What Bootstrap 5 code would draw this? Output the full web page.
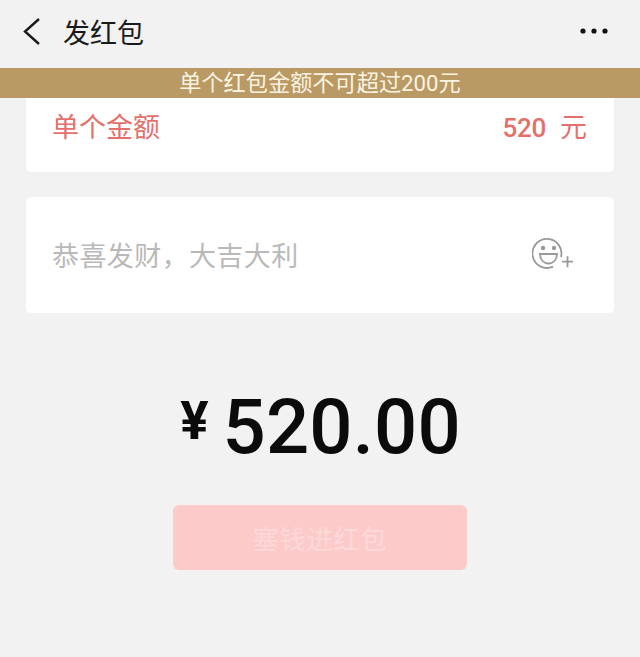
<!DOCTYPE html>
<html lang="zh-CN">
<head>
    <meta charset="UTF-8">
    <meta name="viewport" content="width=device-width, initial-scale=1">
    <title>发红包</title>
    <link href="https://cdn.jsdelivr.net/npm/bootstrap@5.3.2/dist/css/bootstrap.min.css" rel="stylesheet">
    <style>
        body { background: #f2f2f2; font-family: "Roboto", "Noto Sans CJK SC", sans-serif; height: 657px; overflow: hidden; }
        .top-head { height: 68px; padding: 0 30px 0 22px; }
        .top-title { font-size: 27px; color: #1a1a1a; margin-left: 21px; line-height: 1; }
        .dots-icon { display: block; margin-top: -6px; }
        .back-icon { margin-top: -6px; }
        .limit-bar { height: 30px; background: #b99a64; color: #fbf3e2; font-size: 22.2px; line-height: 30px; }
        .form-area { padding: 0 26px; }
        .money-card { height: 74px; background: #fff; border-radius: 0 0 5px 5px; padding: 0 27px 14px 26px; color: #e3716b; font-size: 27px; }
        .money-card .money-val { font-size: 26px; letter-spacing: -.3px; font-weight: 500; }
        .money-card .money-unit { margin-left: 14px; }
        .wish-card { height: 116px; background: #fff; border-radius: 5px; margin-top: 25px; padding: 0 41px 0 26px; color: #b9b9b9; font-size: 27px; letter-spacing: .4px; }
        .wish-text { padding-top: 4px; }
        .smile-icon { margin-top: -5px; }
        .sum-line { margin-top: 68px; height: 92px; padding-left: 1px; color: #0b0b0b; font-family: "Roboto", sans-serif; font-weight: 500; }
        .sum-yen { font-size: 53px; font-weight: 700; margin-right: 14px; margin-bottom: 12px; line-height: 1; }
        .sum-num { font-size: 76px; line-height: 1; letter-spacing: .2px; }
        .send-wrap { margin-top: 32px; }
        .send-btn { width: 294px; height: 65px; padding-top: 11px; background: #fdcaca; color: #fdd9d9; border: 0; border-radius: 6px; font-size: 26px; letter-spacing: 1px; }
        .send-btn:disabled { background: #fdcaca; color: #fdd9d9; opacity: 1; }
    </style>
</head>
<body>

<div class="top-head d-flex align-items-center justify-content-between">
    <div class="d-flex align-items-center">
        <svg class="back-icon" width="20" height="30" viewBox="0 0 20 30"><path d="M17 3 L3 15.5 L17 28" fill="none" stroke="#1a1a1a" stroke-width="2.4"/></svg>
        <span class="top-title">发红包</span>
    </div>
    <svg class="dots-icon" width="30" height="6" viewBox="0 0 30 6">
        <circle cx="3" cy="3" r="2.6" fill="#111"/><circle cx="14" cy="3" r="2.6" fill="#111"/><circle cx="25" cy="3" r="2.6" fill="#111"/>
    </svg>
</div>

<div class="limit-bar text-center">单个红包金额不可超过200元</div>

<div class="form-area">
    <div class="money-card d-flex align-items-center justify-content-between">
        <span>单个金额</span>
        <span><span class="money-val">520</span><span class="money-unit">元</span></span>
    </div>
    <div class="wish-card d-flex align-items-center justify-content-between">
        <span class="wish-text">恭喜发财，大吉大利</span>
        <svg class="smile-icon" width="41" height="33" viewBox="0 0 41 33" fill="none" stroke="#999" stroke-width="1.8">
            <path d="M29 21 A14.5 14.5 0 1 0 21 30.6"/>
            <circle cx="11" cy="12" r="2.2" fill="#999" stroke="none"/>
            <circle cx="22" cy="12" r="2.2" fill="#999" stroke="none"/>
            <path d="M8 18 H25 C25 24 21 27.5 16.5 27.5 C12 27.5 8 24 8 18 Z"/>
            <path d="M30 25.7 H41 M35.5 20.2 V31.2"/>
        </svg>
    </div>
</div>

<div class="sum-line d-flex align-items-center justify-content-center">
    <span class="sum-yen">¥</span>
    <span class="sum-num">520.00</span>
</div>

<div class="send-wrap d-flex justify-content-center">
    <button type="button" class="btn send-btn" disabled>塞钱进红包</button>
</div>

<script src="https://cdn.jsdelivr.net/npm/bootstrap@5.3.2/dist/js/bootstrap.bundle.min.js"></script>
</body>
</html>
